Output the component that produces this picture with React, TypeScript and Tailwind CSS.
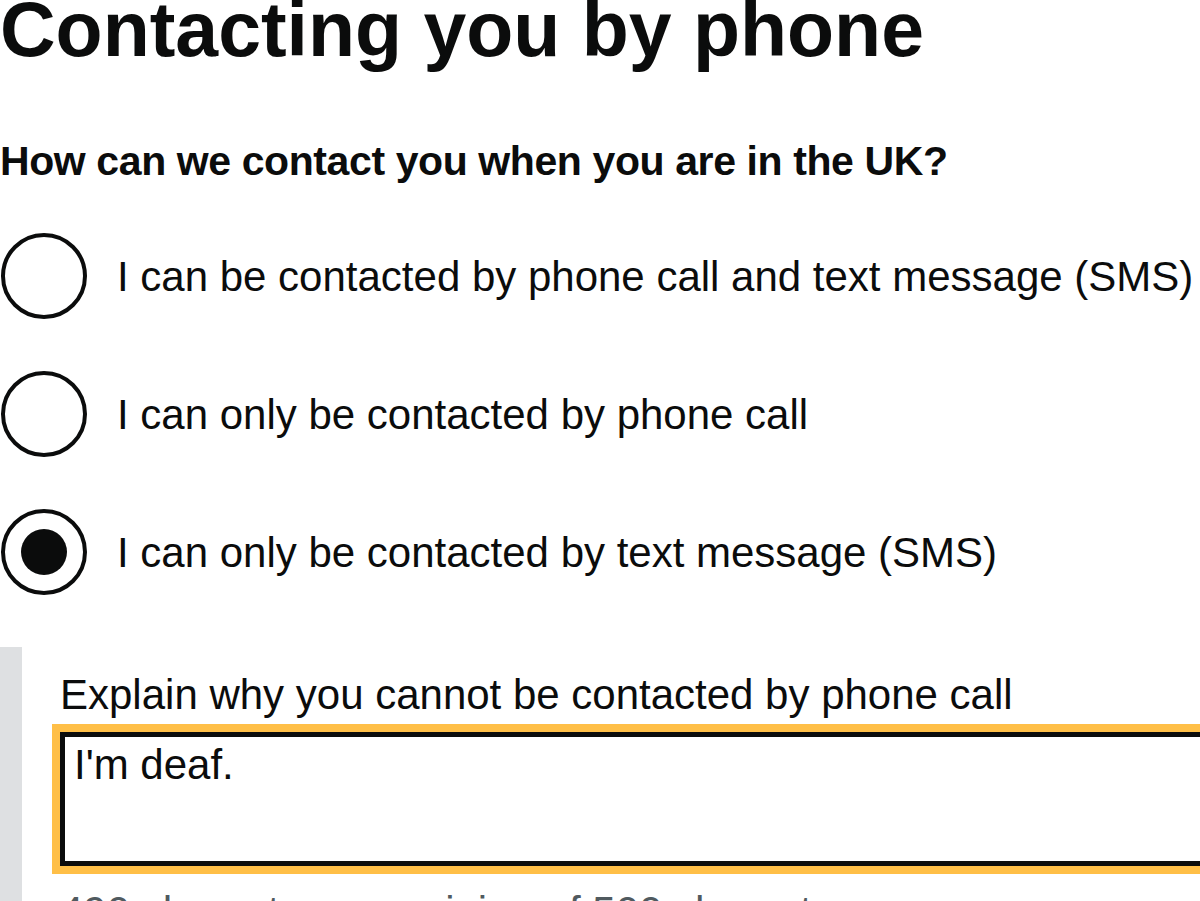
import React from "react";

const font = { fontFamily: '"Liberation Sans", Arial, sans-serif' };

function Radio({ label, checked }: { label: string; checked?: boolean }) {
  return (
    <div className="flex h-[138px] items-center">
      <div className="ml-[1px] flex h-[86px] w-[86px] shrink-0 items-center justify-center rounded-full border-[4px] border-[#0b0c0c] bg-white">
        {checked && <div className="h-[46px] w-[46px] rounded-full bg-[#0b0c0c]" />}
      </div>
      <div className="ml-[30px] whitespace-nowrap pt-[1px] text-[42px] leading-none text-[#0b0c0c]">{label}</div>
    </div>
  );
}

export default function App() {
  return (
    <div className="h-[901px] w-[1200px] overflow-hidden bg-white text-[#0b0c0c]" style={font}>
      <h1 className="mt-[-9px] whitespace-nowrap text-[77px] font-bold leading-none">Contacting you by phone</h1>
      <h2 className="mt-[73px] whitespace-nowrap text-[41px] font-bold leading-none tracking-[-0.4px]">
        How can we contact you when you are in the UK?
      </h2>
      <div className="mt-[25px]">
        <Radio label="I can be contacted by phone call and text message (SMS)" />
        <Radio label="I can only be contacted by phone call" />
        <Radio label="I can only be contacted by text message (SMS)" checked />
      </div>
      <div className="mt-[26px] border-l-[22px] border-[#dee0e2] pl-[38px] pt-[27px] pb-[40px]">
        <div className="whitespace-nowrap text-[42px] leading-none">Explain why you cannot be contacted by phone call</div>
        <div className="mt-[16px] w-[1200px] outline outline-[8px] outline-[#ffbf47]">
          <div className="h-[134px] border-[5px] border-[#0b0c0c] bg-white px-[9px] pt-[7px] text-[42px] leading-none">
            I'm deaf.
          </div>
        </div>
        <div className="mt-[25px] whitespace-nowrap text-[42px] leading-none text-[#505a5f]">
          490 characters remaining of 500 characters
        </div>
      </div>
    </div>
  );
}
